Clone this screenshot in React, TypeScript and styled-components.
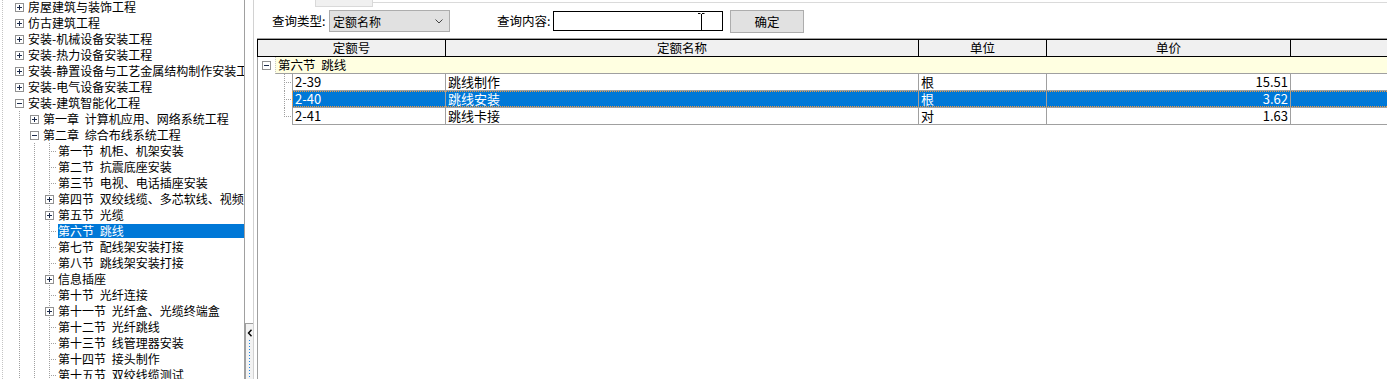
import React from 'react';
import styled, { createGlobalStyle, css } from 'styled-components';

const GlobalStyle = createGlobalStyle`
  html, body { margin: 0; padding: 0; background: #fff; }
  body {
    width: 1387px; height: 379px; overflow: hidden;
    font-family: "Noto Sans CJK SC", "Liberation Sans", sans-serif;
    font-size: 12px; color: #000;
  }
  * { box-sizing: border-box; }
`;

const DOT_V = 'repeating-linear-gradient(to bottom, #a0a0a0 0 1px, transparent 1px 2px)';
const DOT_H = 'repeating-linear-gradient(to right, #a0a0a0 0 1px, transparent 1px 2px)';

const Shell = styled.div`
  display: flex;
  width: 1387px;
  height: 379px;
  overflow: hidden;
  background: #fff;
`;

/* ---------- Tree ---------- */
const TreePanel = styled.div`
  width: 245px;
  flex: none;
  height: 100%;
  border-right: 1px solid #a0a0a0;
  overflow: hidden;
`;

const TreeList = styled.ul`
  list-style: none;
  margin: -1px 0 0 2px;
  padding: 0 0 0 9px;
  border-left: 1px dotted #c4c4c4;
  min-height: 400px;
`;

const TreeRow = styled.li`
  display: flex;
  align-items: center;
  height: 16px;
  white-space: nowrap;
`;

const Guide = styled.span<{ $line: boolean }>`
  flex: none;
  width: 15px;
  height: 16px;
  ${(p) =>
    p.$line &&
    css`
      background-image: ${DOT_V};
      background-size: 1px 100%;
      background-position: 7px 0;
      background-repeat: no-repeat;
    `}
`;

const NodeCell = styled.span<{ $leaf: boolean; $vline: boolean }>`
  flex: none;
  width: 15px;
  height: 16px;
  display: flex;
  align-items: center;
  justify-content: center;
  background-repeat: no-repeat;
  ${(p) =>
    p.$leaf
      ? css`
          background-image: ${DOT_V}, ${DOT_H};
          background-size: 1px 100%, 8px 1px;
          background-position: 7px 0, 7px 8px;
        `
      : p.$vline
      ? css`
          background-image: ${DOT_V};
          background-size: 1px 100%;
          background-position: 7px 0;
        `
      : ''}
`;

const TreeLabel = styled.span<{ $selected?: boolean }>`
  flex: 1 0 auto;
  height: 16px;
  line-height: 16px;
  margin-left: -2px;
  padding: 1px 0 1px 3px;
  word-spacing: 3px;
  background: ${(p) => (p.$selected ? '#0078d7' : 'transparent')};
  background-clip: content-box;
  color: ${(p) => (p.$selected ? '#fff' : '#000')};
`;

const LabelText = styled.span`
  display: block;
  line-height: 14px;
`;

const ExpandBox: React.FC<{ open: boolean }> = ({ open }) => (
  <svg width="9" height="9" viewBox="0 0 9 9" style={{ display: 'block' }}>
    <rect x="0.5" y="0.5" width="8" height="8" fill="#fff" stroke="#919191" />
    <path d={open ? 'M2 4.5h5' : 'M2 4.5h5M4.5 2v5'} stroke="#1b2a4a" strokeWidth="1" />
  </svg>
);

/* ---------- Splitter ---------- */
const Splitter = styled.div`
  width: 12px;
  flex: none;
  height: 100%;
  padding-right: 3px;
`;

const Rail = styled.div`
  height: 100%;
  border-right: 1px solid #d2d2d2;
  display: flex;
  flex-direction: column;
  justify-content: flex-end;
`;

const SplitButton = styled.div`
  height: 56px;
  border-left: 1px solid #a0a0a0;
  border-top: 1px solid #a0a0a0;
  background: #f3f3f3;
  display: flex;
  flex-direction: column;
  align-items: center;
  padding-top: 5px;
  gap: 3px;
`;

const DotRail = styled.div`
  width: 1px;
  flex: 1;
  background: repeating-linear-gradient(to bottom, #1f86e6 0 1px, transparent 1px 3px);
`;

/* ---------- Main ---------- */
const Main = styled.div`
  flex: 1;
  min-width: 0;
  display: flex;
  flex-direction: column;
`;

const TabStrip = styled.div`
  display: flex;
  align-items: flex-start;
  height: 8px;
  flex: none;
`;

const TabGap = styled.div`
  width: 58px;
  flex: none;
`;

const Tab = styled.div`
  width: 58px;
  height: 7px;
  flex: none;
  background: #f0f0f0;
  border: 1px solid #d9d9d9;
  border-top: none;
`;

const TabRule = styled.div`
  flex: 1;
  margin-top: 2px;
  border-top: 1px solid #dadada;
`;

const QueryBar = styled.div`
  display: flex;
  align-items: flex-start;
  height: 30px;
  flex: none;
  padding: 2px 0 0 15px;
`;

const QueryLabel = styled.label<{ $gap?: number }>`
  flex: none;
  width: ${(p) => (p.$gap ? 56 : 57)}px;
  margin-left: ${(p) => p.$gap ?? 0}px;
  line-height: 22px;
  font-size: 12.5px;
  white-space: nowrap;
`;

const SelectBox = styled.div`
  flex: none;
  width: 121px;
  height: 22px;
  background: #e1e1e1;
  border: 1px solid #adadad;
  display: flex;
  align-items: center;
  justify-content: space-between;
  padding: 0 6px 0 3px;
  font-size: 12px;
`;

const InputWrap = styled.div`
  flex: none;
  position: relative;
  width: 170px;
  height: 20px;
  margin-top: 1px;
  border: 1px solid #000;
  background: #fff;
`;

const Cursor = styled.svg`
  position: absolute;
  left: 143px;
  top: 1px;
`;

const Button = styled.button`
  flex: none;
  width: 74px;
  height: 23px;
  margin-left: 7px;
  background: #e1e1e1;
  border: 1px solid #adadad;
  font-family: inherit;
  font-size: 12.5px;
  color: #000;
  padding: 0;
`;

/* ---------- Grid ---------- */
const Grid = styled.div`
  flex: 1;
  border-left: 1px solid #a0a0a0;
  border-top: 1px solid #a0a0a0;
`;

const HeaderRow = styled.div`
  display: grid;
  grid-template-columns: 188px 473px 128px 244px 1fr;
  height: 18px;
  margin-left: -1px;
  border: 1px solid #000;
  border-right: none;
  background: #f0f0f0;
`;

const HeaderCell = styled.div<{ $last?: boolean }>`
  border-right: ${(p) => (p.$last ? 'none' : '1px solid #000')};
  text-align: center;
  line-height: 16px;
  font-size: 12.5px;
`;

const GroupRow = styled.div`
  display: flex;
  height: 17px;
`;

const GroupGutter = styled.div`
  width: 17px;
  flex: none;
  display: flex;
  align-items: center;
  padding: 0 0 1px 4px;
`;

const GroupCell = styled.div`
  flex: 1;
  background: #ffffe1;
  border-left: 1px dotted #c8c8c8;
  border-bottom: 1px solid #a0a0a0;
  padding-left: 2px;
  line-height: 16px;
  font-size: 12.5px;
  word-spacing: 3px;
`;

const DataRow = styled.div`
  display: flex;
  height: 17px;
`;

const DataGutter = styled.div<{ $last?: boolean }>`
  width: 34px;
  flex: none;
  background-image: ${DOT_V}, ${DOT_H};
  background-repeat: no-repeat;
  background-size: 1px ${(p) => (p.$last ? '9px' : '100%')}, 8px 1px;
  background-position: 26px 0, 26px 8px;
`;

const Cells = styled.div<{ $selected?: boolean }>`
  flex: 1;
  position: relative;
  display: grid;
  grid-template-columns: 154px 473px 128px 244px 1fr;
  border-bottom: 1px solid #a0a0a0;
  background: ${(p) => (p.$selected ? '#0078d7' : '#fff')};
  color: ${(p) => (p.$selected ? '#fff' : '#000')};
  ${(p) =>
    p.$selected &&
    css`
      &::after {
        content: '';
        position: absolute;
        left: 0;
        right: 0;
        top: 0;
        bottom: 0;
        border-top: 1px dotted #f39a3c;
        border-bottom: 1px dotted #f39a3c;
        border-left: 1px dotted #f39a3c;
        pointer-events: none;
      }
    `}
`;

const Cell = styled.div<{ $first?: boolean; $num?: boolean; $last?: boolean }>`
  border-right: ${(p) => (p.$last ? 'none' : '1px solid #a0a0a0')};
  border-left: ${(p) => (p.$first ? '1px solid #a0a0a0' : 'none')};
  padding: ${(p) => (p.$num ? '0 2px 0 0' : '0 0 0 2px')};
  text-align: ${(p) => (p.$num ? 'right' : 'left')};
  line-height: 16px;
  font-size: 13px;
  white-space: nowrap;
`;

type Node = { level: number; kind: 'plus' | 'minus' | 'leaf'; text: string; selected?: boolean };

const tree: Node[] = [
  { level: 0, kind: 'plus', text: '房屋建筑与装饰工程' },
  { level: 0, kind: 'plus', text: '仿古建筑工程' },
  { level: 0, kind: 'plus', text: '安装-机械设备安装工程' },
  { level: 0, kind: 'plus', text: '安装-热力设备安装工程' },
  { level: 0, kind: 'plus', text: '安装-静置设备与工艺金属结构制作安装工程' },
  { level: 0, kind: 'plus', text: '安装-电气设备安装工程' },
  { level: 0, kind: 'minus', text: '安装-建筑智能化工程' },
  { level: 1, kind: 'plus', text: '第一章 计算机应用、网络系统工程' },
  { level: 1, kind: 'minus', text: '第二章 综合布线系统工程' },
  { level: 2, kind: 'leaf', text: '第一节 机柜、机架安装' },
  { level: 2, kind: 'leaf', text: '第二节 抗震底座安装' },
  { level: 2, kind: 'leaf', text: '第三节 电视、电话插座安装' },
  { level: 2, kind: 'plus', text: '第四节 双绞线缆、多芯软线、视频线缆' },
  { level: 2, kind: 'plus', text: '第五节 光缆' },
  { level: 2, kind: 'leaf', text: '第六节 跳线', selected: true },
  { level: 2, kind: 'leaf', text: '第七节 配线架安装打接' },
  { level: 2, kind: 'leaf', text: '第八节 跳线架安装打接' },
  { level: 2, kind: 'plus', text: '信息插座' },
  { level: 2, kind: 'leaf', text: '第十节 光纤连接' },
  { level: 2, kind: 'plus', text: '第十一节 光纤盒、光缆终端盒' },
  { level: 2, kind: 'leaf', text: '第十二节 光纤跳线' },
  { level: 2, kind: 'leaf', text: '第十三节 线管理器安装' },
  { level: 2, kind: 'leaf', text: '第十四节 接头制作' },
  { level: 2, kind: 'leaf', text: '第十五节 双绞线缆测试' },
];

const rows = [
  { code: '2-39', name: '跳线制作', unit: '根', price: '15.51' },
  { code: '2-40', name: '跳线安装', unit: '根', price: '3.62', selected: true },
  { code: '2-41', name: '跳线卡接', unit: '对', price: '1.63' },
];

export default function App() {
  return (
    <>
      <GlobalStyle />
      <Shell>
        <TreePanel>
          <TreeList>
            {tree.map((n, i) => (
              <TreeRow key={i}>
                {Array.from({ length: n.level }).map((_, g) => (
                  <Guide key={g} $line />
                ))}
                <NodeCell $leaf={n.kind === 'leaf'} $vline={n.level === 2}>
                  {n.kind !== 'leaf' && <ExpandBox open={n.kind === 'minus'} />}
                </NodeCell>
                <TreeLabel $selected={n.selected}>
                  <LabelText>{n.text}</LabelText>
                </TreeLabel>
              </TreeRow>
            ))}
          </TreeList>
        </TreePanel>

        <Splitter>
          <Rail>
            <SplitButton>
              <svg width="6" height="8" viewBox="0 0 6 8" style={{ display: 'block' }}>
                <path d="M4.5 0.8L1.5 4L4.5 7.2" fill="none" stroke="#000" strokeWidth="1.4" />
              </svg>
              <DotRail />
            </SplitButton>
          </Rail>
        </Splitter>

        <Main>
          <TabStrip>
            <TabGap />
            <Tab />
            <TabRule />
          </TabStrip>

          <QueryBar>
            <QueryLabel>查询类型:</QueryLabel>
            <SelectBox>
              <span>定额名称</span>
              <svg width="8" height="5" viewBox="0 0 8 5" style={{ display: 'block' }}>
                <path d="M0.5 0.5L4 4L7.5 0.5" fill="none" stroke="#444" strokeWidth="1" />
              </svg>
            </SelectBox>
            <QueryLabel $gap={47}>查询内容:</QueryLabel>
            <InputWrap>
              <Cursor width="9" height="18" viewBox="0 0 9 18">
                <path
                  d="M1 0.5h2.5M5 0.5h2.5M4.5 1v16M1 17.5h2.5M5 17.5h2.5"
                  fill="none"
                  stroke="#000"
                  strokeWidth="1"
                />
              </Cursor>
            </InputWrap>
            <Button>确定</Button>
          </QueryBar>

          <Grid>
            <HeaderRow>
              <HeaderCell>定额号</HeaderCell>
              <HeaderCell>定额名称</HeaderCell>
              <HeaderCell>单位</HeaderCell>
              <HeaderCell>单价</HeaderCell>
              <HeaderCell $last />
            </HeaderRow>

            <GroupRow>
              <GroupGutter>
                <ExpandBox open />
              </GroupGutter>
              <GroupCell>第六节 跳线</GroupCell>
            </GroupRow>

            {rows.map((r, i) => (
              <DataRow key={r.code}>
                <DataGutter $last={i === rows.length - 1} />
                <Cells $selected={r.selected}>
                  <Cell $first>{r.code}</Cell>
                  <Cell>{r.name}</Cell>
                  <Cell>{r.unit}</Cell>
                  <Cell $num>{r.price}</Cell>
                  <Cell $last />
                </Cells>
              </DataRow>
            ))}
          </Grid>
        </Main>
      </Shell>
    </>
  );
}
